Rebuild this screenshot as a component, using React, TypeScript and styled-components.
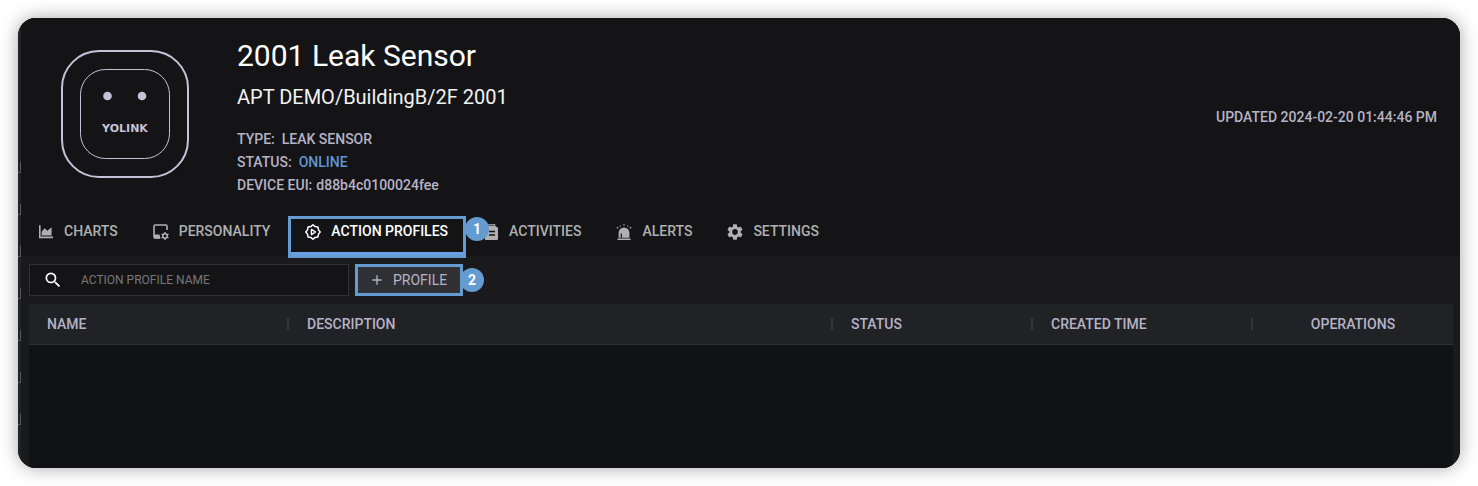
import React from "react";
import styled, { createGlobalStyle } from "styled-components";
import { MdAdd, MdSearch, MdSettings } from "react-icons/md";

const GlobalStyle = createGlobalStyle`
  * { box-sizing: border-box; }
  body {
    margin: 0;
    background: #fff;
    font-family: Roboto, "Liberation Sans", sans-serif;
  }
`;

const Page = styled.div`
  display: flex;
  min-height: 100vh;
  padding: 18px;
`;

const Window = styled.main`
  display: flex;
  flex: 1;
  min-width: 0;
  overflow: hidden;
  border-radius: 18px;
  background: #141416;
  box-shadow: 0 0 18px rgba(0, 0, 0, 0.35);
`;

const Rail = styled.div`
  display: flex;
  flex-direction: column;
  flex: none;
  gap: 31px;
  width: 3px;
  padding-top: 144px;
  background: #222325;
`;

const RailMark = styled.span`
  height: 11px;
  border-right: 1px solid #55565a;
  border-bottom: 1px solid #55565a;
`;

const Content = styled.div`
  display: flex;
  flex: 1;
  flex-direction: column;
  min-width: 0;
  background: #1a1a1c;
`;

const Header = styled.header`
  display: flex;
  align-items: flex-start;
  gap: 48px;
  padding: 16px 23px 12px 40px;
  background: #141416;
`;

const DeviceImage = styled.svg`
  flex: none;
  width: 128px;
  height: 128px;
  margin-top: 16px;
`;

const DeviceInfo = styled.div`
  flex: 1;
  min-width: 0;
`;

const Title = styled.h1`
  margin: 0;
  color: #fff;
  font-size: 30px;
  font-weight: 400;
  line-height: 44px;
`;

const Path = styled.h2`
  margin: 0 0 12px;
  color: #f2f2f4;
  font-size: 20px;
  font-weight: 400;
  line-height: 38px;
`;

const Fact = styled.p`
  display: flex;
  gap: ${(p: { $gap: number }) => p.$gap}px;
  margin: 0;
  color: #b7b3c6;
  font-size: 14px;
  font-weight: 500;
  line-height: 23px;
`;

const Online = styled.span`
  color: #6195d6;
`;

const Updated = styled.p`
  margin: 72px 0 0;
  color: #b7b3c6;
  font-size: 14px;
  font-weight: 500;
  line-height: 22px;
`;

const Tabs = styled.nav`
  display: flex;
  gap: 1px;
  background: #141416;
`;

const Tab = styled.button<{ $active?: boolean }>`
  position: relative;
  display: flex;
  align-items: center;
  gap: 10px;
  height: 47px;
  padding: 0 17px 4px;
  border: 0;
  background: none;
  color: ${(p) => (p.$active ? "#fff" : "#b0b0b2")};
  font: 500 14px/20px Roboto, "Liberation Sans", sans-serif;
  white-space: nowrap;

  svg {
    flex: none;
    width: 16px;
    height: 16px;
    margin-top: 3px;
  }
`;

const Highlight = styled.span`
  position: absolute;
  inset: 7px -1px -2px 0;
  border: 3px solid #649bd0;
  box-shadow: inset 0 -3px #699fe4;
`;

const Step = styled.span`
  position: absolute;
  z-index: 1;
  top: ${(p: { $top: number }) => p.$top}px;
  left: 100%;
  width: 24px;
  height: 24px;
  border-radius: 50%;
  background: #649bd0;
  color: #fff;
  font: 700 14px/24px Roboto, "Liberation Sans", sans-serif;
  text-align: center;
`;

const Toolbar = styled.div`
  display: flex;
  gap: 6px;
  padding: 8px;
`;

const SearchBox = styled.label`
  display: flex;
  align-items: center;
  gap: 18px;
  width: 320px;
  height: 32px;
  padding: 0 13px;
  border: 1px solid #303036;
  background: #141416;
  color: #fff;

  svg {
    flex: none;
    width: 20px;
    height: 20px;
  }
`;

const SearchInput = styled.input`
  flex: 1;
  min-width: 0;
  padding: 0;
  border: 0;
  outline: 0;
  background: none;
  color: #fff;
  font: 400 12px/20px Roboto, "Liberation Sans", sans-serif;

  &::placeholder {
    color: #77777b;
    opacity: 1;
  }
`;

const AddButton = styled.button`
  position: relative;
  display: flex;
  align-items: center;
  gap: 8px;
  height: 32px;
  padding: 0 13px 0 11px;
  border: 3px solid #649bd0;
  background: #303135;
  color: #b7b3c6;
  font: 400 14px/20px Roboto, "Liberation Sans", sans-serif;

  svg {
    width: 16px;
    height: 16px;
  }
`;

const TablePanel = styled.section`
  flex: 1;
  margin: 0 7px 0 8px;
  background: #111216;
`;

const Table = styled.table`
  width: 100%;
  border-spacing: 0;
  table-layout: fixed;
`;

const HeadCell = styled.th<{ $width?: number; $center?: boolean }>`
  width: ${(p) => (p.$width ? `${p.$width}px` : "auto")};
  height: 41px;
  padding: 0 0 0 ${(p) => (p.$center ? 0 : 18)}px;
  border-bottom: 1px solid #303034;
  background: #212226;
  color: #b7b3c6;
  font-size: 14px;
  font-weight: 500;
  line-height: 20px;
  text-align: ${(p) => (p.$center ? "center" : "left")};
`;

const HeadLabel = styled.span<{ $center?: boolean }>`
  display: flex;
  align-items: center;
  justify-content: ${(p) => (p.$center ? "center" : "space-between")};
`;

const Divider = styled.span`
  width: 2px;
  height: 12px;
  background: #36363a;
`;

const ChartsIcon = () => (
  <svg viewBox="0 0 16 16" fill="none" aria-hidden="true">
    <path d="M1.8 1.2V13.4H15" stroke="currentColor" strokeWidth="1.6" />
    <path d="M3.6 11.6V7.8L6.6 4.2L9.4 6.8L13.6 3.2V11.6Z" fill="currentColor" />
  </svg>
);

const PersonalityIcon = () => (
  <svg viewBox="0 0 16 16" fill="none" aria-hidden="true">
    <path d="M14 6V2.2Q14 1 12.8 1H2.2Q1 1 1 2.2V12.8Q1 14 2.2 14H7" stroke="currentColor" strokeWidth="1.6" />
    <path d="M1 10.5H6.5L7.5 14.6H2Q1 14.6 1 13.5Z" fill="currentColor" />
    <circle cx="12" cy="12" r="2.2" stroke="currentColor" strokeWidth="1.5" />
    <path
      d="M12 8V9.6M12 14.4V16M8.5 10L10 10.9M14 13.1L15.5 14M8.5 14L10 13.1M14 10.9L15.5 10"
      stroke="currentColor"
      strokeWidth="1.4"
    />
  </svg>
);

const ActionIcon = () => (
  <svg viewBox="0 0 16 16" fill="none" stroke="currentColor" strokeLinejoin="round" aria-hidden="true">
    <path
      d="M8 .8L9.9 2.4L12.9 2.9L13.5 5.9L15.2 8L13.5 10.1L12.9 13.1L9.9 13.6L8 15.2L6.1 13.6L3.1 13.1L2.5 10.1L.8 8L2.5 5.9L3.1 2.9L6.1 2.4Z"
      strokeWidth="1.5"
    />
    <path d="M6.4 5.4L10.6 8L6.4 10.6Z" strokeWidth="1.4" />
  </svg>
);

const ActivitiesIcon = () => (
  <svg viewBox="0 0 16 16" fill="none" aria-hidden="true">
    <path d="M.5 .2H11.6V1.6" stroke="currentColor" strokeWidth="1.3" />
    <path d="M2 1.6H11.6L15 3.8V14.8Q15 16 13.8 16H2Z" fill="currentColor" />
    <path d="M6 7.5H12M6 11H12" stroke="#141416" strokeWidth="1.4" />
  </svg>
);

const AlertsIcon = () => (
  <svg viewBox="0 0 16 16" fill="none" aria-hidden="true">
    <path d="M2.6 13.8V8.8A5.4 5.4 0 0 1 13.4 8.8V13.8Z" fill="currentColor" />
    <path d="M5.3 13.8V9.4" stroke="#141416" strokeWidth="1.2" />
    <path d="M1.5 15.2H14.5" stroke="currentColor" strokeWidth="1.4" />
    <path
      d="M8 0V1.6M3.8 1.6L4.4 2.5M12.2 1.6L11.6 2.5M.8 3.2L2.2 4.4M15.2 3.2L13.8 4.4"
      stroke="currentColor"
      strokeWidth="1.2"
    />
  </svg>
);

export default function App() {
  return (
    <>
      <GlobalStyle />
      <Page>
        <Window>
          <Rail aria-hidden="true">
            {[0, 1, 2, 3, 4, 5, 6].map((mark) => (
              <RailMark key={mark} />
            ))}
          </Rail>
          <Content>
            <Header>
              <DeviceImage viewBox="0 0 128 128" fill="none" role="img" aria-label="YoLink leak sensor">
                <rect x="1" y="1" width="126" height="126" rx="37" stroke="#c5c1d6" strokeWidth="2" />
                <rect x="19.5" y="19.5" width="89" height="89" rx="25" stroke="#c5c1d6" />
                <circle cx="46.5" cy="46" r="4.3" fill="#c5c1d6" />
                <circle cx="81" cy="46" r="4.3" fill="#c5c1d6" />
                <text
                  x="64"
                  y="82"
                  textAnchor="middle"
                  fill="#c5c1d6"
                  fontFamily="DejaVu Sans, sans-serif"
                  fontSize="11"
                  fontWeight="700"
                >
                  YOLINK
                </text>
              </DeviceImage>
              <DeviceInfo>
                <Title>2001 Leak Sensor</Title>
                <Path>APT DEMO/BuildingB/2F 2001</Path>
                <Fact $gap={7}>
                  <span>TYPE:</span>
                  <span>LEAK SENSOR</span>
                </Fact>
                <Fact $gap={7}>
                  <span>STATUS:</span>
                  <Online>ONLINE</Online>
                </Fact>
                <Fact $gap={4}>
                  <span>DEVICE EUI:</span>
                  <span>d88b4c0100024fee</span>
                </Fact>
              </DeviceInfo>
              <Updated>UPDATED 2024-02-20 01:44:46 PM</Updated>
            </Header>
            <Tabs>
              <Tab type="button">
                <ChartsIcon />
                CHARTS
              </Tab>
              <Tab type="button">
                <PersonalityIcon />
                PERSONALITY
              </Tab>
              <Tab type="button" $active>
                <ActionIcon />
                ACTION PROFILES
                <Highlight />
                <Step $top={8}>1</Step>
              </Tab>
              <Tab type="button">
                <ActivitiesIcon />
                ACTIVITIES
              </Tab>
              <Tab type="button">
                <AlertsIcon />
                ALERTS
              </Tab>
              <Tab type="button">
                <MdSettings viewBox="2 2 20 20" />
                SETTINGS
              </Tab>
            </Tabs>
            <Toolbar>
              <SearchBox>
                <MdSearch aria-hidden="true" />
                <SearchInput type="text" placeholder="ACTION PROFILE NAME" aria-label="Action profile name" />
              </SearchBox>
              <AddButton type="button">
                <MdAdd />
                PROFILE
                <Step $top={1}>2</Step>
              </AddButton>
            </Toolbar>
            <TablePanel>
              <Table>
                <thead>
                  <tr>
                    <HeadCell $width={260}>
                      <HeadLabel>
                        NAME
                        <Divider />
                      </HeadLabel>
                    </HeadCell>
                    <HeadCell>
                      <HeadLabel>
                        DESCRIPTION
                        <Divider />
                      </HeadLabel>
                    </HeadCell>
                    <HeadCell $width={200}>
                      <HeadLabel>
                        STATUS
                        <Divider />
                      </HeadLabel>
                    </HeadCell>
                    <HeadCell $width={220}>
                      <HeadLabel>
                        CREATED TIME
                        <Divider />
                      </HeadLabel>
                    </HeadCell>
                    <HeadCell $width={200} $center>
                      <HeadLabel $center>OPERATIONS</HeadLabel>
                    </HeadCell>
                  </tr>
                </thead>
                <tbody />
              </Table>
            </TablePanel>
          </Content>
        </Window>
      </Page>
    </>
  );
}
